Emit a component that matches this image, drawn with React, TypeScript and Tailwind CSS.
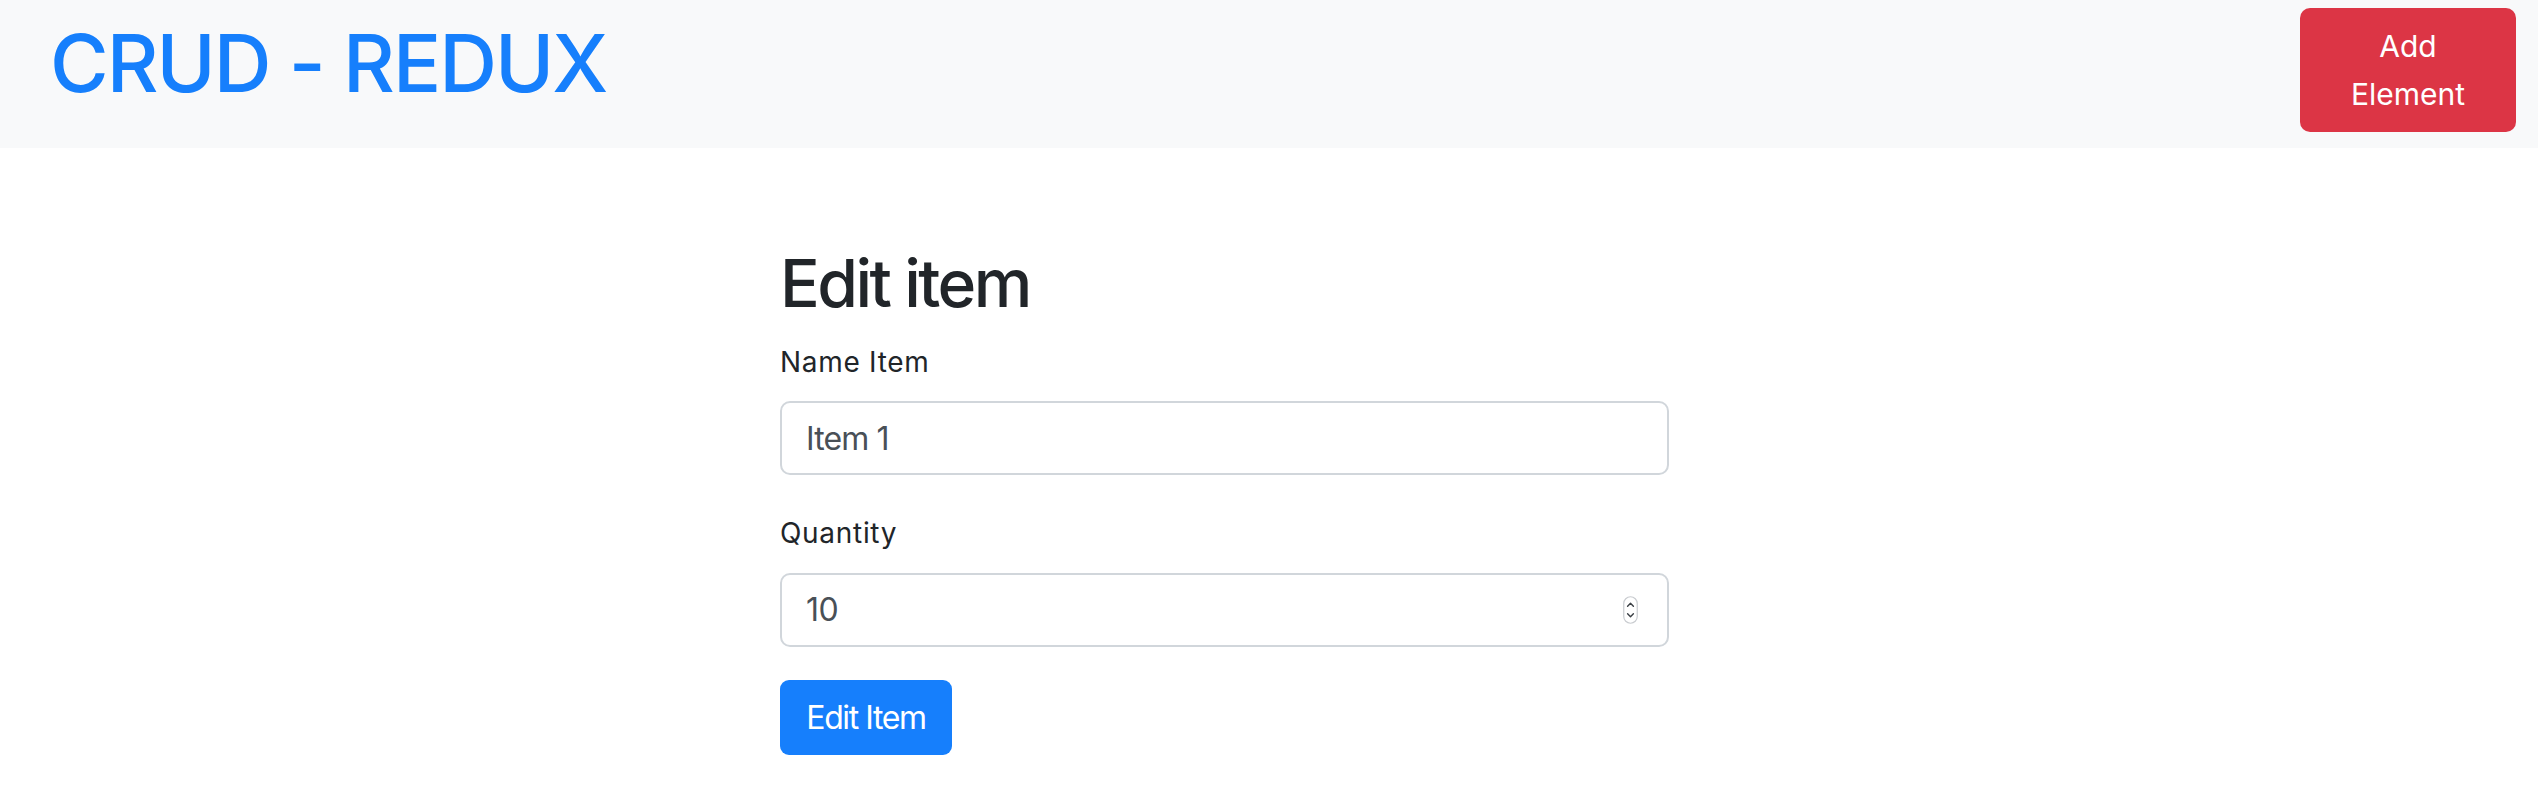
import React from "react";

function Spinner() {
  return (
    <svg width="15" height="28" viewBox="0 0 15 28" fill="none" className="shrink-0">
      <rect x="0.75" y="0.75" width="13.5" height="26.5" rx="6.75" stroke="#c9ccd0" strokeWidth="1.2" fill="#ffffff" />
      <path d="M4.6 10.2 L7.5 7.3 L10.4 10.2" stroke="#3a3f44" strokeWidth="1.4" strokeLinecap="round" strokeLinejoin="round" />
      <path d="M4.6 17.8 L7.5 20.7 L10.4 17.8" stroke="#3a3f44" strokeWidth="1.4" strokeLinecap="round" strokeLinejoin="round" />
    </svg>
  );
}

export default function App() {
  const font = { fontFamily: "Inter, 'Noto Sans', 'Liberation Sans', sans-serif" };
  return (
    <div className="min-h-[808px] bg-white" style={font}>
      <header className="flex h-[148px] items-start justify-between bg-[#f8f9fa] pl-[50px] pr-[22px] pt-[8px]">
        <h1 className="mt-[15px] text-[80px] font-[450] leading-[80px] tracking-[-2px] text-[#167ffc]">CRUD - REDUX</h1>
        <button className="h-[124px] w-[216px] rounded-[10px] bg-[#dc3545] text-center text-[30px] leading-[48px] text-white">
          Add
          <br />
          Element
        </button>
      </header>
      <main className="pl-[780px]">
        <form className="flex w-[889px] flex-col pt-[96px]" onSubmit={(e) => e.preventDefault()}>
          <h2 className="text-[66px] font-[550] leading-[79px] tracking-[-2.6px] text-[#212529]">Edit item</h2>
          <label className="mt-[19px] text-[28px] leading-[40px] tracking-[0.7px] text-[#212529]">Name Item</label>
          <input
            type="text"
            defaultValue="Item 1"
            className="mt-[19px] h-[74px] w-full rounded-[10px] border-2 border-[#d1d6db] bg-white px-[24px] text-[32px] tracking-[-0.9px] text-[#495057] outline-none"
          />
          <label className="mt-[38px] text-[28px] leading-[40px] tracking-[0.7px] text-[#212529]">Quantity</label>
          <div className="mt-[20px] flex h-[74px] w-full items-center rounded-[10px] border-2 border-[#d1d6db] bg-white pl-[24px] pr-[29px]">
            <input
              type="text"
              defaultValue="10"
              className="min-w-0 flex-1 bg-transparent text-[32px] tracking-[-0.5px] text-[#495057] outline-none"
            />
            <Spinner />
          </div>
          <div className="mt-[33px]">
            <button
              type="submit"
              className="h-[75px] w-[172px] rounded-[9px] bg-[#167ffc] text-[32px] tracking-[-1.4px] text-white"
            >
              Edit Item
            </button>
          </div>
        </form>
      </main>
    </div>
  );
}
